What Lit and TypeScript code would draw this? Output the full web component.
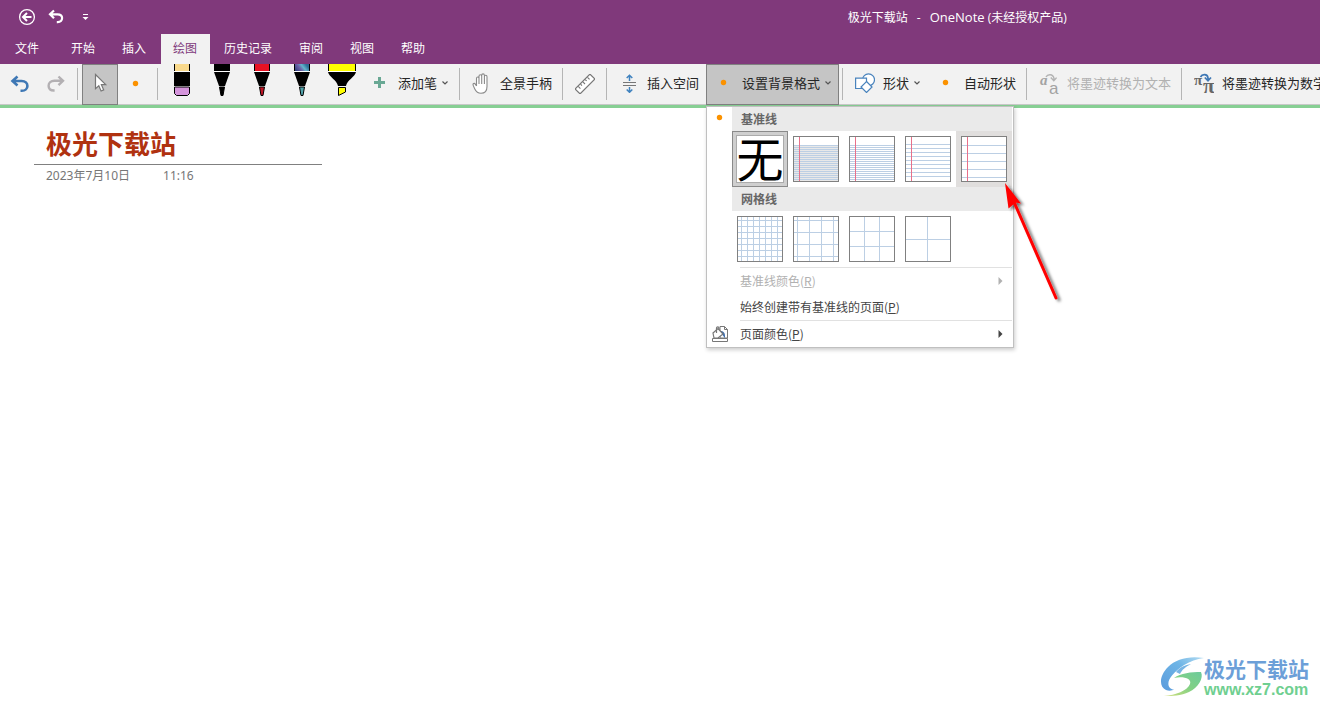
import { LitElement, html, css, svg, nothing } from "lit";
import { customElement, property } from "lit/decorators.js";
import { classMap } from "lit/directives/class-map.js";

const range = (from: number, to: number, step: number): number[] => {
  const out: number[] = [];
  for (let v = from; v <= to; v += step) out.push(v);
  return out;
};

const undoIcon = html`<svg width="20" height="20" viewBox="0 0 20 20" aria-hidden="true">
  <path d="M7.500 2.500 2.500 7l5 4.500M3 7h8.600c3.800 0 5.800 2.200 5.800 4.900 0 2.800-2.200 4.900-5.600 4.900h-1.300" fill="none" stroke="#3f78b5" stroke-width="2.600"/></svg>`;
const redoIcon = html`<svg width="20" height="20" viewBox="0 0 20 20" aria-hidden="true">
  <path d="M12.500 2.500 17 6.800l-4.500 4.400M16.600 6.800H8.400C4.900 6.800 2.600 9 2.600 11.700c0 2.800 2 4.800 5.400 4.800h.6" fill="none" stroke="#b3b0b3" stroke-width="2.400"/></svg>`;
const cursorIcon = html`<svg width="20" height="20" viewBox="0 0 20 20" aria-hidden="true">
  <path d="M5.500 1.500v14.200l3.300-3 2.300 5.300 2.600-1.100-2.300-5.200h4.300z" fill="#fff" stroke="#777" stroke-width="1.200"/></svg>`;
const dotIcon = html`<svg width="20" height="20" viewBox="0 0 20 20" aria-hidden="true"><circle cx="9.500" cy="9.500" r="2.700" fill="#fb9200"/></svg>`;
const plusIcon = html`<svg width="20" height="20" viewBox="0 0 20 20" aria-hidden="true"><path d="M9.500 4v11M4 9.500h11" stroke="#69a894" stroke-width="3"/></svg>`;
const handIcon = html`<svg width="20" height="22" viewBox="0 -1 20 22" aria-hidden="true">
  <path d="M4.500 13V5.500c0-2 2.500-2 2.500 0V3.200c0-2 2.700-2 2.700 0V2.400c0-2 2.700-2 2.700 0v1.300c0-2 2.600-2 2.600 0v9.800c0 4.500-2 6.800-6 6.800-3.300 0-4.900-1.500-6.200-4.300L1.300 12.600c-.9-2 1.100-2.900 2-1.500l1.200 1.900M7 5v6M9.700 3v8M12.400 3.500V11" fill="#fff" stroke="#8a8a8a" stroke-width="1.100"/></svg>`;
const rulerIcon = html`<svg width="20" height="20" viewBox="0 0 20 20" aria-hidden="true">
  <g transform="rotate(-45 10 10)"><rect x="-.5" y="6.500" width="21" height="7" fill="#fff" stroke="#777" stroke-width="1.200"/>
  <path d="M3.500 7v3M6.700 7v2M10 7v3M13.300 7v2M16.500 7v3" stroke="#777" stroke-width="1.100"/></g></svg>`;
const spaceIcon = html`<svg width="20" height="20" viewBox="0 0 20 20" aria-hidden="true">
  <path d="M4 9.500h13M4 12.500h13" stroke="#777"/>
  <path d="M10.500 8V2.500M7.700 5l2.800-2.800L13.300 5M10.500 14v5M7.700 16.500l2.800 2.800 2.800-2.800" fill="none" stroke="#3f82bf" stroke-width="1.500"/></svg>`;
const shapesIcon = html`<svg width="20" height="20" viewBox="0 0 20 20" aria-hidden="true">
  <g fill="#fff" stroke="#4a84bd" stroke-width="1.200"><circle cx="13.500" cy="6.800" r="6"/><path d="M.6 5.100h10.900v10.400H.6z"/><path d="m11.500 8.500 5.500 5.500-5.500 5.500L6 14z"/></g></svg>`;
const inkTextIcon = html`<svg width="20" height="22" viewBox="0 -1 20 22" aria-hidden="true">
  <text x="1" y="12" class="glyph-italic" fill="#a3a3a3">a</text><text x="10" y="21" class="glyph-sans" fill="#a3a3a3">a</text>
  <path d="M7 4c1.500-3 7-3.500 8 1.500v1.800M11.800 4.600l3 3.200 2.800-3.200" fill="none" stroke="#b3b3b3" stroke-width="1.400"/></svg>`;
const inkMathIcon = html`<svg width="20" height="22" viewBox="0 -1 20 22" aria-hidden="true">
  <text x="0" y="12" class="glyph-pi" fill="#666">π</text><text x="9" y="20" class="glyph-pi-big" fill="#666">π</text>
  <path d="M6.500 4c1.500-3 7-3.500 7.500 1v2M10.800 4.500l3.200 3.300 3-3.300" fill="none" stroke="#3f78b5" stroke-width="1.700"/></svg>`;
const chevron = html`<svg width="6" height="6" viewBox="0 0 6 6" aria-hidden="true"><path d="m.5 1.500 2.500 2.500 2.500-2.500" fill="none" stroke="#555" stroke-width="1.200"/></svg>`;
const submenuArrow = html`<svg width="5" height="8" viewBox="0 0 5 8" aria-hidden="true"><path d="M.5 0v8l4-4z" fill="currentColor"/></svg>`;
const pageColorIcon = html`<svg width="18" height="18" viewBox="0 0 18 18" aria-hidden="true">
  <path d="M9 1.500h4.500l3 3v8.500H9z" fill="#fff" stroke="#777"/>
  <path d="M13.500 1.500v3h3" fill="none" stroke="#777"/>
  <path d="M10 6c2.500 0 4.500 2 4 7-1.500-1-2-3.500-4-4z" fill="#3f6fae"/>
  <path d="m2 8 5-4.500 5 5.500-5 4H3z" fill="#fff" stroke="#777" stroke-width="1.200"/>
  <path d="M5.500 8V3.200c0-1.900 2.500-1.900 2.500 0V5" fill="none" stroke="#777" stroke-width="1.200"/>
  <path d="M1.500 13.500h15v3h-15z" fill="#fff" stroke="#777"/></svg>`;

type PenKind = "eraser" | "pen" | "marker";
interface Pen { kind: PenKind; color: string; tip: string; label: string }

const pens: Pen[] = [
  { kind: "eraser", color: "#f9d98c", tip: "#d595dc", label: "橡皮擦" },
  { kind: "pen", color: "#000", tip: "#000", label: "黑色笔" },
  { kind: "pen", color: "#e81224", tip: "#c01525", label: "红色笔" },
  { kind: "pen", color: "url(#galaxy)", tip: "#4fa3ab", label: "银河笔" },
  { kind: "marker", color: "#ff0", tip: "#ff0", label: "黄色荧光笔" },
];

const drawPen = (p: Pen) => {
  if (p.kind === "eraser") {
    return svg`<rect x="12" y="0" width="16" height="7" fill="#000"/><rect x="13" y="0" width="14" height="7" fill=${p.color}/>
      <path d="M12 7.500h16" stroke="#fff"/><rect x="12" y="8" width="16" height="14" fill="#000"/><path d="M12 22.500h16" stroke="#fff"/>
      <path d="M12.500 23h15v6.500l-2 2h-11l-2-2z" fill=${p.tip} stroke="#000"/>`;
  }
  if (p.kind === "marker") {
    return svg`<rect x="6" y="0" width="28" height="7" fill="#000"/><rect x="7" y="0" width="26" height="7" fill=${p.color}/>
      <path d="M6 7.500h28" stroke="#fff"/><path d="M6 8h28c-1 5-9 8-10 14h-8C15 16 7 13 6 8z" fill="#000"/>
      <path d="M16.500 23.500h7V28l-7 3.500z" fill=${p.tip} stroke="#000"/>`;
  }
  return svg`<defs><linearGradient id="galaxy" x1="0" y1="1" x2="1" y2="0.600"><stop offset="0" stop-color="#2a3a78"/><stop offset="0.450" stop-color="#6c62a8"/><stop offset="0.700" stop-color="#63b5cc"/><stop offset="1" stop-color="#2d6f96"/></linearGradient></defs>
    <rect x="12" y="0" width="16" height="7" fill="#000"/><rect x="13" y="0" width="14" height="7" fill=${p.color}/>
    <path d="M12 7.500h16" stroke="#fff"/><path d="M12 8h16l-5 14h-6z" fill="#000"/>
    <path d="M17.500 23h5l-1.500 8.500h-2z" fill=${p.tip} stroke="#000"/>`;
};

interface Sheet { label: string; rows: number[]; cols: number[]; margin?: boolean; shade?: boolean; hover?: boolean }

const ruled: Sheet[] = [
  { label: "窄横线", rows: range(9, 44, 2), cols: [], margin: true, shade: true },
  { label: "大学横线", rows: range(9, 44, 2), cols: [], margin: true },
  { label: "标准横线", rows: range(8, 42, 4), cols: [], margin: true },
  { label: "宽横线", rows: range(9, 42, 8), cols: [], margin: true, hover: true },
];
const grids: Sheet[] = [
  { label: "小网格", rows: range(4, 42, 6), cols: range(4, 42, 6) },
  { label: "中网格", rows: range(4, 42, 12), cols: range(4, 42, 12) },
  { label: "大网格", rows: [15, 30], cols: [15, 30] },
  { label: "超大网格", rows: [23], cols: [22] },
];

@customElement("page-sheet")
class PageSheet extends LitElement {
  @property({ attribute: false }) sheet!: Sheet;

  static styles = css`
    :host { display: block; }
    .art { display: block; shape-rendering: crispEdges; }
    .margin-line { fill: #e8708a; }
  `;

  render() {
    const s = this.sheet;
    return html`<svg class="art" width="46" height="46" viewBox="0 0 46 46" aria-hidden="true">
      <rect width="46" height="46" fill="#fff"/>
      ${s.shade ? svg`<rect x="1" y="9" width="44" height="36" fill="#e8e8e8"/>` : nothing}
      ${s.rows.map((y) => svg`<rect x="1" y=${y} width="44" height="1" fill="#bccfe4"/>`)}
      ${s.cols.map((x) => svg`<rect x=${x} y="1" width="1" height="44" fill="#bccfe4"/>`)}
      ${s.margin ? svg`<rect class="margin-line" x="5.500" y="1" width="1" height="44"/>` : nothing}
      <rect x="0.500" y="0.500" width="45" height="45" fill="none" stroke="#808080"/>
    </svg>`;
  }
}

@customElement("app-root")
class AppRoot extends LitElement {
  static styles = css`
    :host {
      display: flex;
      flex-direction: column;
      position: relative;
      height: 100vh;
      overflow: hidden;
      background: #fff;
      color: #262626;
      font: 12px/16px "Open Sans", "Noto Sans CJK SC", sans-serif;
    }
    button {
      margin: 0;
      padding: 0;
      border: 0;
      background: none;
      color: inherit;
      font: inherit;
      white-space: nowrap;
    }
    svg { display: block; flex: none; }
    .head { background: #80397b; color: #fff; }
    .titlebar { display: flex; align-items: center; height: 34px; }
    .quick { display: flex; align-items: center; gap: 12px; flex: 0 0 64%; padding-left: 18px; box-sizing: border-box; }
    .doc-title { display: flex; align-items: baseline; gap: 9px; padding-left: 3px; white-space: nowrap; }
    .app-name { font-size: 13px; }
    .tabs { display: flex; gap: 2px; height: 30px; padding-left: 3px; }
    .tab { padding: 0 13px 0 12px; }
    .tab.file { margin-right: 5px; }
    .tab.active { background: #f2f2f2; color: #80397b; }
    .ribbon {
      display: flex;
      height: 40px;
      padding-left: 2px;
      background: #f2f2f2;
      border-bottom: 1px solid #c8c8c8;
      font-size: 13px;
      font-family: "Noto Sans CJK SC", sans-serif;
    }
    .tool { display: flex; align-items: center; flex: none; box-sizing: border-box; gap: 8px; height: 40px; padding: 0 7px 2px 8px; }
    .tool.square { justify-content: center; width: 36px; padding: 0; }
    .tool:disabled { color: #b1b1b1; }
    .tool.picked { height: 41px; padding-bottom: 3px; background: #c5c5c5; box-shadow: inset 0 0 0 1px #808080; }
    .tool.pen { width: 40px; padding: 0; }
    .caption { display: flex; align-items: center; gap: 5px; padding-right: 1px; }
    .sep { flex: none; width: 1px; height: 32px; margin: 4px 4px 0 3px; background: #b5b5b5; }
    .anchor { position: relative; flex: none; }
    .edge { height: 3px; background: #87cf93; }
    .menu {
      position: absolute;
      z-index: 2;
      top: 42px;
      left: 0;
      width: 308px;
      box-sizing: border-box;
      padding-right: 1px;
      border: 1px solid #c0c0c0;
      background: #fff;
      box-shadow: 1px 2px 4px rgba(0, 0, 0, 0.2);
      font-size: 12px;
      color: #444;
    }
    .group { display: grid; grid-template-columns: 25px 1fr; }
    .mark { display: flex; justify-content: center; padding-top: 1px; }
    .group-title { margin: 0; padding: 0 9px; height: 24px; background: #eaeaea; color: #666; font: inherit; font-weight: 700; line-height: 23px; }
    .sheets { display: grid; grid-template-columns: repeat(5, 56px); grid-column: 2; }
    .cell { display: grid; place-items: center; height: 56px; }
    .cell.hover { background: #e0dedd; }
    .cell.chosen { background: #cfcfcf; box-shadow: inset 0 0 0 1px #8a8a8a; }
    .none { display: flex; justify-content: center; width: 46px; height: 46px; border: 1px solid #ababab; background: #fff; color: #000; font-size: 47px; line-height: 42px; }
    .rule { height: 1px; margin-left: 33px; background: #e1e1e1; }
    .item { display: grid; grid-template-columns: 33px 1fr auto; align-items: center; width: 100%; height: 26px; padding: 0 9px 1px 0; text-align: left; }
    .item:disabled { color: #b1b1b1; }
    .lead { padding-left: 4px; }
    .page { flex: 1; padding: 20px 34px; }
    .heading { display: inline-block; width: 288px; max-width: 100%; }
    .page-title {
      margin: 0;
      padding: 0 12px 6px;
      border-bottom: 1px solid #808080;
      color: #b03210;
      font: 700 26px/30px "Noto Sans CJK SC", sans-serif;
    }
    .stamp { display: flex; gap: 33px; padding: 2px 12px; color: #767676; font: 12px/18px "Noto Sans", "Noto Sans CJK SC", sans-serif; }
    .pointer { position: absolute; z-index: 3; left: 1000px; top: 178px; }
    .brand { position: absolute; right: 11px; bottom: 7px; display: flex; align-items: center; }
    .brand-name { display: block; color: #6c9fd8; font: 700 21px/24px "Noto Sans CJK SC", sans-serif; }
    .brand-url { display: block; padding-top: 1px; color: #6fcf90; font: 700 16px/18px "Liberation Sans", sans-serif; text-decoration: none; }
    .glyph-italic { font: italic 700 15px "Liberation Serif", serif; }
    .glyph-sans { font: 17px "Liberation Sans", sans-serif; }
    .glyph-pi { font: 700 15px "Liberation Serif", serif; }
    .glyph-pi-big { font: 700 21px "Liberation Serif", serif; }
  `;

  private tabs = ["文件", "开始", "插入", "绘图", "历史记录", "审阅", "视图", "帮助"];

  private renderSheet = (s: Sheet) => html`<button class=${classMap({ cell: true, hover: !!s.hover })} aria-label=${s.label}>
    <page-sheet .sheet=${s}></page-sheet>
  </button>`;

  private renderMenu() {
    return html`<div class="menu">
      <div class="group">
        <span class="mark">${dotIcon}</span>
        <h2 class="group-title">基准线</h2>
        <div class="sheets">
          <button class="cell chosen"><span class="none">无</span></button>
          ${ruled.map(this.renderSheet)}
        </div>
      </div>
      <div class="group">
        <span></span>
        <h2 class="group-title">网格线</h2>
        <div class="sheets">${grids.map(this.renderSheet)}</div>
      </div>
      <div class="rule"></div>
      <button class="item" disabled><span></span><span>基准线颜色(<u>R</u>)</span>${submenuArrow}</button>
      <button class="item"><span></span><span>始终创建带有基准线的页面(<u>P</u>)</span></button>
      <div class="rule"></div>
      <button class="item"><span class="lead">${pageColorIcon}</span><span>页面颜色(<u>P</u>)</span>${submenuArrow}</button>
    </div>`;
  }

  render() {
    return html`
      <header class="head">
        <div class="titlebar">
          <div class="quick">
            <button aria-label="返回"><svg width="18" height="18" viewBox="0 0 18 18"><circle cx="9" cy="9" r="7.400" fill="none" stroke="#fff" stroke-width="1.300"/><path d="M13.500 9H5M9 5 5 9l4 4" fill="none" stroke="#fff" stroke-width="2"/></svg></button>
            <button aria-label="撤消"><svg width="16" height="16" viewBox="0 0 16 16"><path d="M6 1.500 2 5.300l4 3.900M2.500 5.300h7c3 0 4.600 1.700 4.600 3.800 0 2.200-1.700 4-4.300 4h-1" fill="none" stroke="#fff" stroke-width="2.200"/></svg></button>
            <button aria-label="自定义快速访问工具栏"><svg width="20" height="8" viewBox="0 0 20 8"><path d="M7 1.500h5" stroke="#fff"/><path d="M6.500 4h6l-3 3z" fill="#fff"/></svg></button>
          </div>
          <div class="doc-title"><span>极光下载站</span><span>-</span><span><span class="app-name">OneNote</span> (未经授权产品)</span></div>
        </div>
        <nav class="tabs">
          ${this.tabs.map((t, i) => html`<button class=${classMap({ tab: true, file: i === 0, active: i === 3 })}>${t}</button>`)}
        </nav>
      </header>
      <div class="ribbon">
        <button class="tool square" aria-label="撤消">${undoIcon}</button>
        <button class="tool square" aria-label="恢复">${redoIcon}</button>
        <span class="sep"></span>
        <button class="tool square picked" aria-label="选择">${cursorIcon}</button>
        <button class="tool square" aria-label="套索选择">${dotIcon}</button>
        <span class="sep"></span>
        ${pens.map((p) => html`<button class="tool pen" aria-label=${p.label}><svg width="40" height="40" viewBox="0 0 40 40">${drawPen(p)}</svg></button>`)}
        <button class="tool">${plusIcon}<span class="caption">添加笔${chevron}</span></button>
        <span class="sep"></span>
        <button class="tool">${handIcon}全景手柄</button>
        <span class="sep"></span>
        <button class="tool square" aria-label="标尺">${rulerIcon}</button>
        <span class="sep"></span>
        <button class="tool">${spaceIcon}插入空间</button>
        <div class="anchor">
          <button class="tool picked" aria-expanded="true">${dotIcon}<span class="caption">设置背景格式${chevron}</span></button>
          ${this.renderMenu()}
        </div>
        <span class="sep"></span>
        <button class="tool">${shapesIcon}<span class="caption">形状${chevron}</span></button>
        <button class="tool">${dotIcon}自动形状</button>
        <span class="sep"></span>
        <button class="tool" disabled>${inkTextIcon}将墨迹转换为文本</button>
        <span class="sep"></span>
        <button class="tool">${inkMathIcon}将墨迹转换为数学</button>
      </div>
      <div class="edge"></div>
      <main class="page">
        <div class="heading">
          <h1 class="page-title">极光下载站</h1>
          <div class="stamp"><span>2023年7月10日</span><span>11:16</span></div>
        </div>
      </main>
      <svg class="pointer" width="70" height="130" viewBox="0 0 70 130" aria-hidden="true">
        <defs><filter id="soft" x="-30%" y="-30%" width="160%" height="160%"><feDropShadow dx="3" dy="2" stdDeviation="1.800" flood-color="#000" flood-opacity="0.550"/></filter></defs>
        <g filter="url(#soft)" fill="#f00"><path d="M5 5 21 25.500l-5.500-1-7 6z"/><path d="m14 24 42 96" stroke="#f00" stroke-width="3" stroke-linecap="round"/></g>
      </svg>
      <div class="brand">
        <svg width="44" height="44" viewBox="0 0 44 44" aria-hidden="true">
          <defs>
            <linearGradient id="sky" x1="0" y1="1" x2="1" y2="0"><stop offset="0" stop-color="#5b9bdc"/><stop offset="0.600" stop-color="#6db4e6"/><stop offset="1" stop-color="#b4dcf2"/></linearGradient>
            <linearGradient id="leaf" x1="0" y1="1" x2="1" y2="0"><stop offset="0" stop-color="#d3df7d"/><stop offset="0.500" stop-color="#83d184"/><stop offset="1" stop-color="#6ccb9c"/></linearGradient>
          </defs>
          <path d="M44 3C29 .5 16 4 8 12-1 21-1 32 6 35c3 1.200 6 .8 8-.4-6-.6-8-7-2-14C18 13 29 5 44 3z" fill="url(#sky)"/>
          <path d="M16 17c4-5 9-7 15-8-6 3-9 6-11 10z" fill="#77b4e4"/>
          <path d="M14 23c7-5 17-6 27-6 3 6-3 16-12 20-8 4-17 4-25 4 12-1 23-5 26-12 2-5-6-8-16-6z" fill="url(#leaf)"/>
        </svg>
        <div><span class="brand-name">极光下载站</span><a class="brand-url" href="#">www.xz7.com</a></div>
      </div>
    `;
  }
}
